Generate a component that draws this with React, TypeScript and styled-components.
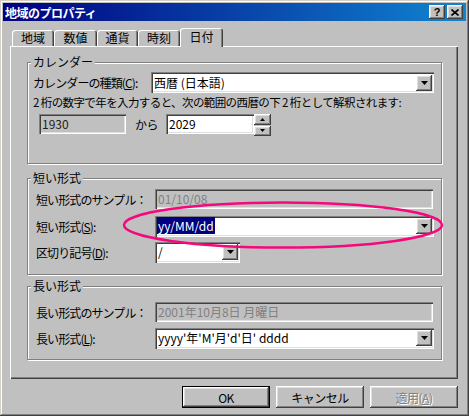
import React from 'react'
import styled, { createGlobalStyle, css } from 'styled-components'

const GlobalStyle = createGlobalStyle`
  html, body {
    margin: 0;
    padding: 0;
    background: #c0c0c0;
  }
  body {
    font-family: "Noto Sans CJK JP", "Liberation Sans", sans-serif;
    font-size: 12px;
    color: #000;
  }
`

const raised = css`
  box-shadow: inset -1px -1px #404040, inset 1px 1px #fff, inset -2px -2px #808080, inset 2px 2px #dfdfdf;
`

const sunken = css`
  box-shadow: inset 1px 1px #808080, inset 2px 2px #404040, inset -1px -1px #fff, inset -2px -2px #dfdfdf;
`

const Window = styled.div`
  position: relative;
  box-sizing: border-box;
  width: 469px;
  height: 416px;
  padding: 3px;
  background: #c0c0c0;
  display: flex;
  flex-direction: column;
  box-shadow: inset -1px -1px #404040, inset 1px 1px #d4d0c8, inset -2px -2px #808080, inset 2px 2px #fff;
`

const TitleBar = styled.div`
  height: 18px;
  display: flex;
  align-items: center;
  padding: 0 3px 0 2px;
  background: linear-gradient(to right, #000080, #1084d0);
  color: #fff;
  font-weight: bold;
  letter-spacing: -0.5px;
`

const TitleButtons = styled.div`
  margin-left: auto;
  display: flex;
  gap: 2px;
`

const TitleButton = styled.div`
  ${raised};
  width: 16px;
  height: 14px;
  background: #c0c0c0;
  color: #000;
  display: flex;
  align-items: center;
  justify-content: center;
  font-family: "Liberation Sans", sans-serif;
  font-size: 11px;
  font-weight: bold;
  letter-spacing: 0;
`

const Body = styled.div`
  flex: 1;
  display: flex;
  flex-direction: column;
  padding: 7px 8px 0 7px;
`

const TabStrip = styled.div`
  height: 18px;
  display: flex;
  align-items: flex-end;
  padding-left: 2px;
`

const Tab = styled.div<{ $w: number; $active?: boolean }>`
  position: relative;
  box-sizing: border-box;
  width: ${p => p.$w}px;
  height: ${p => (p.$active ? 19 : 16)}px;
  margin-bottom: ${p => (p.$active ? -1 : 0)}px;
  z-index: ${p => (p.$active ? 2 : 0)};
  padding-top: ${p => (p.$active ? 2 : 1)}px;
  border-radius: 3px 3px 0 0;
  background: #c0c0c0;
  box-shadow: inset 1px 1px #fff, inset -1px 0 #404040, inset -2px 0 #808080;
  text-align: center;
  line-height: 14px;
`

const Panel = styled.div`
  box-sizing: border-box;
  height: 333px;
  padding: 16px 16px 0 17px;
  box-shadow: inset 1px 1px #fff, inset -1px -1px #404040, inset -2px -2px #808080;
`

const Group = styled.div<{ $h: number; $mt?: number }>`
  position: relative;
  box-sizing: border-box;
  height: ${p => p.$h}px;
  margin-top: ${p => p.$mt ?? 0}px;
  border: 1px solid #808080;
  box-shadow: inset 1px 1px #fff, 1px 1px #fff;
`

const GroupLabel = styled.div`
  position: absolute;
  top: -8px;
  left: 3px;
  padding: 0 2px;
  background: #c0c0c0;
  line-height: 14px;
`

const Row = styled.div<{ $mt: number; $h?: number }>`
  display: flex;
  align-items: center;
  height: ${p => p.$h ?? 20}px;
  margin-top: ${p => p.$mt}px;
`

const Label = styled.div<{ $w: number; $pl: number }>`
  box-sizing: border-box;
  width: ${p => p.$w}px;
  padding-left: ${p => p.$pl}px;
  white-space: nowrap;
  letter-spacing: -0.9px;
`

const Note = styled.div`
  margin-top: 2px;
  padding-left: 5px;
  height: 15px;
  line-height: 15px;
  white-space: pre;
  font-size: 11.5px;
  letter-spacing: -0.6px;
`

const Field = styled.div<{ $w: number; $h?: number; $ml?: number; $bg?: string; $fg?: string }>`
  ${sunken};
  box-sizing: border-box;
  display: flex;
  align-items: center;
  width: ${p => p.$w}px;
  height: ${p => p.$h ?? 20}px;
  margin-left: ${p => p.$ml ?? 0}px;
  padding: 0 2px 0 3px;
  background: ${p => p.$bg ?? '#fff'};
  color: ${p => p.$fg ?? '#000'};
  white-space: nowrap;
  overflow: hidden;
`

const FieldText = styled.span`
  flex: 1;
  line-height: 14px;
`

const Selected = styled.span`
  background: #000080;
  color: #fff;
  padding: 0 1px;
  margin-left: -1px;
`

const DropButton = styled.div`
  ${raised};
  width: 16px;
  height: 16px;
  background: #c0c0c0;
  display: flex;
  align-items: center;
  justify-content: center;
  flex: none;
`

const Kara = styled.div`
  width: 31px;
  margin-left: 9px;
  letter-spacing: -0.5px;
`

const Spinner = styled.div`
  display: flex;
  flex-direction: column;
  gap: 1px;
  align-self: flex-start;
  height: 22px;
`

const SpinButton = styled.div`
  ${raised};
  width: 17px;
  flex: 1;
  background: #c0c0c0;
  display: flex;
  align-items: center;
  justify-content: center;
`

const ButtonRow = styled.div`
  margin-top: 7px;
  display: flex;
  justify-content: flex-end;
  gap: 6px;
`

const Button = styled.div<{ $default?: boolean; $disabled?: boolean }>`
  box-sizing: border-box;
  width: 88px;
  height: 22px;
  display: flex;
  align-items: center;
  justify-content: center;
  background: #c0c0c0;
  letter-spacing: -0.5px;
  color: ${p => (p.$disabled ? '#808080' : '#000')};
  text-shadow: ${p => (p.$disabled ? '1px 1px #fff' : 'none')};
  box-shadow: ${p =>
    p.$default
      ? 'inset 0 0 0 1px #000, inset -2px -2px #404040, inset 2px 2px #fff, inset -3px -3px #808080, inset 3px 3px #dfdfdf'
      : 'inset -1px -1px #404040, inset 1px 1px #fff, inset -2px -2px #808080, inset 2px 2px #dfdfdf'};
`

const Highlight = styled.svg`
  position: absolute;
  left: 122px;
  top: 200px;
  pointer-events: none;
`

const Arrow = ({ up = false, w = 7 }: { up?: boolean; w?: number }) => {
  const h = Math.ceil(w / 2)
  return (
    <svg width={w} height={h} viewBox={`0 0 ${w} ${h}`}>
      <polygon points={up ? `0,${h} ${w},${h} ${w / 2},0` : `0,0 ${w},0 ${w / 2},${h}`} fill="#000" />
    </svg>
  )
}

const Combo = ({ w, children }: { w: number; children: React.ReactNode }) => (
  <Field $w={w} $h={21}>
    <FieldText>{children}</FieldText>
    <DropButton>
      <Arrow />
    </DropButton>
  </Field>
)

const tabs = [
  { label: '地域', w: 42 },
  { label: '数値', w: 43 },
  { label: '通貨', w: 41 },
  { label: '時刻', w: 42 },
  { label: '日付', w: 43, active: true },
]

export default function App() {
  return (
    <>
      <GlobalStyle />
      <Window>
        <TitleBar>
          <span>地域のプロパティ</span>
          <TitleButtons>
            <TitleButton>?</TitleButton>
            <TitleButton>
              <svg width="8" height="7" viewBox="0 0 8 7">
                <path d="M0.5 0.5 L7.5 6.5 M7.5 0.5 L0.5 6.5" stroke="#000" strokeWidth="1.6" />
              </svg>
            </TitleButton>
          </TitleButtons>
        </TitleBar>

        <Body>
          <TabStrip>
            {tabs.map(t => (
              <Tab key={t.label} $w={t.w} $active={t.active}>
                {t.label}
              </Tab>
            ))}
          </TabStrip>

          <Panel>
            <Group $h={102}>
              <GroupLabel>カレンダー</GroupLabel>
              <Row $mt={9} $h={21}>
                <Label $w={123} $pl={5}>
                  カレンダーの種類(<u>C</u>):
                </Label>
                <Combo w={283}>西暦 (日本語)</Combo>
              </Row>
              <Note>2 桁の数字で年を入力すると、次の範囲の西暦の下 2 桁として解釈されます:</Note>
              <Row $mt={4}>
                <Field $w={87} $ml={11} $bg="#c0c0c0" $fg="#202020">
                  <FieldText>1930</FieldText>
                </Field>
                <Kara>から</Kara>
                <Field $w={88}>
                  <FieldText>2029</FieldText>
                </Field>
                <Spinner>
                  <SpinButton>
                    <Arrow up w={5} />
                  </SpinButton>
                  <SpinButton>
                    <Arrow w={5} />
                  </SpinButton>
                </Spinner>
              </Row>
            </Group>

            <Group $h={97} $mt={14}>
              <GroupLabel>短い形式</GroupLabel>
              <Row $mt={10}>
                <Label $w={127} $pl={8}>
                  短い形式のサンプル：
                </Label>
                <Field $w={278} $bg="#c0c0c0" $fg="#808080">
                  <FieldText>01/10/08</FieldText>
                </Field>
              </Row>
              <Row $mt={7}>
                <Label $w={127} $pl={8}>
                  短い形式(<u>S</u>):
                </Label>
                <Combo w={279}>
                  <Selected>yy/MM/dd</Selected>
                </Combo>
              </Row>
              <Row $mt={6}>
                <Label $w={127} $pl={8}>
                  区切り記号(<u>D</u>):
                </Label>
                <Combo w={85}>/</Combo>
              </Row>
            </Group>

            <Group $h={74} $mt={11}>
              <GroupLabel>長い形式</GroupLabel>
              <Row $mt={15}>
                <Label $w={127} $pl={8}>
                  長い形式のサンプル：
                </Label>
                <Field $w={278} $bg="#c0c0c0" $fg="#808080">
                  <FieldText>2001年10月8日 月曜日</FieldText>
                </Field>
              </Row>
              <Row $mt={6}>
                <Label $w={127} $pl={8}>
                  長い形式(<u>L</u>):
                </Label>
                <Combo w={279}>yyyy'年'M'月'd'日' dddd</Combo>
              </Row>
            </Group>
          </Panel>

          <ButtonRow>
            <Button $default>OK</Button>
            <Button>キャンセル</Button>
            <Button $disabled>
              適用(<u>A</u>)
            </Button>
          </ButtonRow>
        </Body>

        <Highlight width="324" height="50" viewBox="0 0 324 50">
          <ellipse cx="161" cy="25" rx="159" ry="22.5" fill="none" stroke="#f5087e" strokeWidth="2.5" />
        </Highlight>
      </Window>
    </>
  )
}
